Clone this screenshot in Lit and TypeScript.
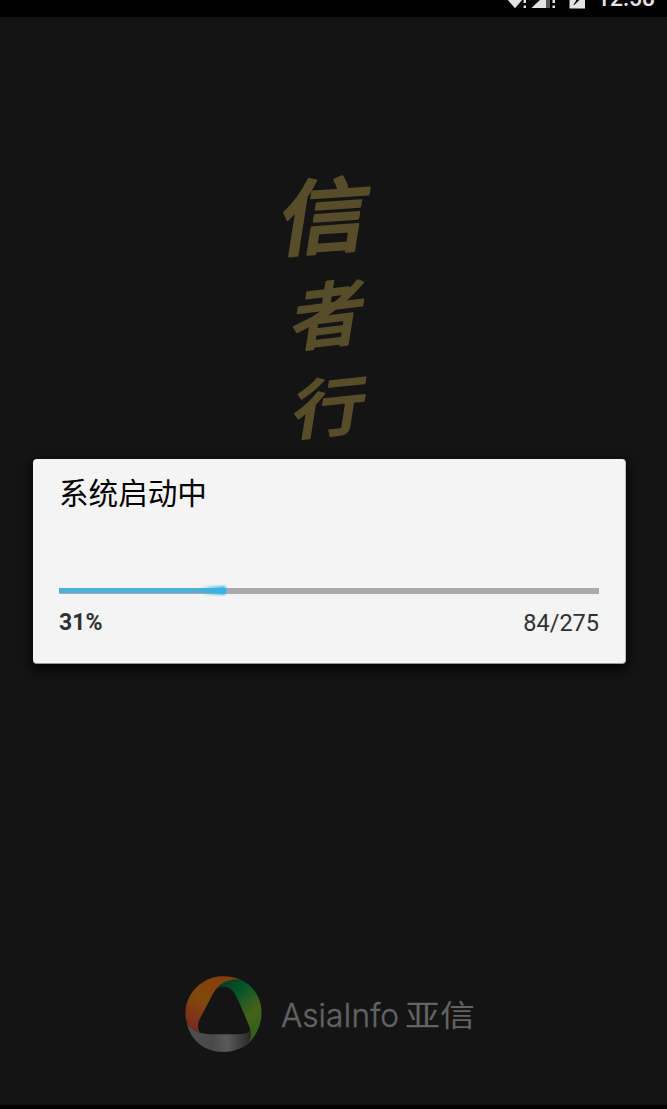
import { LitElement, html, css } from "lit";
import { customElement, property } from "lit/decorators.js";

@customElement("status-bar")
class StatusBar extends LitElement {
  static styles = css`
    :host { display: flex; height: 17px; background: #000; overflow: hidden; justify-content: flex-end; }
    svg { display: block; width: 180px; height: 17px; }
    text { font: 500 23.5px Roboto, sans-serif; fill: #e4e4e4; }
  `;
  render() {
    return html`<svg viewBox="487 0 180 17">
      <g fill="#e4e4e4">
        <path d="M507 -1H523L515 8.2Z" />
        <path d="M532 8V7.5L541 -1H546V8Z" />
        <path d="M546 0H550V8H546Z" fill="#555" />
        <path d="M523.6 -1H526V3H523.6ZM523.6 5.5H526V8H523.6ZM552.5 -1H555V3H552.5ZM552.5 5.5H555V8H552.5Z" />
        <path d="M569.5 -1H585V8.5H569.5Z" />
      </g>
      <path d="M576 -1H580.5L574 5.2L573.4 4.8L576 0.8Z" fill="#111" />
      <text x="597" y="5.5" textLength="58" lengthAdjust="spacingAndGlyphs">12:58</text>
    </svg>`;
  }
}

@customElement("brand-logo")
class BrandLogo extends LitElement {
  static styles = css`
    :host { display: flex; align-items: center; gap: 20px; }
    .ring { width: 77px; height: 76px; display: block; }
    .word { width: 200px; height: 50px; display: block; overflow: visible; }
    .latin { font: 300 32.5px Inter, sans-serif; fill: #636363; stroke: #636363; stroke-width: .4px; }
    .han { font: 34px "Noto Sans CJK SC", sans-serif; fill: #636363; }
  `;
  render() {
    return html`
      <svg class="ring" viewBox="31 32 231 228">
        <defs>
          <linearGradient id="warm" x1=".75" y1="0" x2=".15" y2="1">
            <stop offset="0" stop-color="#863d0e" /><stop offset=".5" stop-color="#82480a" />
            <stop offset=".78" stop-color="#7e3616" /><stop offset="1" stop-color="#7b2728" />
          </linearGradient>
          <linearGradient id="leaf" x1=".15" y1="0" x2=".8" y2="1">
            <stop offset="0" stop-color="#07391d" /><stop offset=".3" stop-color="#07552a" />
            <stop offset=".65" stop-color="#476219" /><stop offset="1" stop-color="#2c601d" />
          </linearGradient>
          <linearGradient id="steel">
            <stop offset="0" stop-color="#505050" /><stop offset=".4" stop-color="#494949" />
            <stop offset=".62" stop-color="#5a5a5a" /><stop offset="1" stop-color="#242424" />
          </linearGradient>
        </defs>
        <path fill="url(#steel)" d="M35 166C48 201 88 207 120 207L182 207C212 207 230 204 228 180C237 205 232 225 217 238C155 280 52 263 35 166Z" />
        <path fill="url(#leaf)" d="M126 62C145 39 166 37 193 41C271 72 285 176 217 238C234 218 231 198 221 176L192 108C178 76 166 64 148 64C138 63 130 67 126 72Z" />
        <path fill="url(#warm)" d="M193 41C155 28 116 31 87 49C49 72 28 112 33 158C40 185 55 195 77 202C67 190 68 174 77 157L111 93C126 64 145 42 193 41Z" />
      </svg>
      <svg class="word" viewBox="282 989 200 50">
        <text class="latin" x="281" y="1027" textLength="118" lengthAdjust="spacingAndGlyphs">AsiaInfo</text>
        <text class="han" transform="translate(405 1026) scale(1 .88)" textLength="70" lengthAdjust="spacingAndGlyphs">亚信</text>
      </svg>`;
  }
}

@customElement("progress-dialog")
class ProgressDialog extends LitElement {
  @property({ type: Number }) value = 84;
  @property({ type: Number }) max = 275;
  static styles = css`
    :host {
      display: flex; flex-direction: column; box-sizing: border-box;
      height: 205px; padding: 11px 26px 0 26px; border-radius: 4px;
      background: #f4f4f4; border-bottom: 1px solid #999; border-right: 1px solid #bbb;
      box-shadow: 0 5px 12px 2px rgba(0, 0, 0, .75);
      font-family: Roboto, "Noto Sans CJK SC", sans-serif; color: #303032;
    }
    .title { font: 29.6px/44px "Noto Sans CJK SC", sans-serif; color: #000; }
    .track { height: 6px; background: #aaa; margin-top: 74px; }
    .fill { height: 5px; background: linear-gradient(90deg, #4db1d8 85%, #37b3e5); position: relative; }
    .fill::after {
      content: ""; position: absolute; right: 0; top: -2px; width: 28px; height: 9px;
      border-radius: 60% 3px 3px 60%; background: linear-gradient(90deg, transparent, #37b3e5); filter: blur(.8px);
    }
    .row { display: flex; justify-content: space-between; align-items: center; margin-top: 14px; font-size: 23.5px; line-height: 30px; }
    .percent { font-weight: 700; font-size: 23px; }
  `;
  render() {
    return html`
      <div class="title">系统启动中</div>
      <div class="track"><div class="fill" style="width:${(this.value / this.max + 0.004) * 100}%"></div></div>
      <div class="row">
        <span class="percent">${Math.round((this.value / this.max) * 100)}%</span>
        <span>${this.value}/${this.max}</span>
      </div>`;
  }
}

@customElement("app-root")
class AppRoot extends LitElement {
  static styles = css`
    :host {
      display: flex; flex-direction: column; position: relative; box-sizing: border-box;
      width: 667px; height: 1109px; background: #141414; border-bottom: 4px solid #000; overflow: hidden;
    }
    .splash { flex: 1; display: flex; flex-direction: column; justify-content: space-between; padding: 118px 0 53px; }
    .motto { width: 140px; height: 340px; margin-left: 255px; display: block; overflow: visible; }
    .motto text { font: 500 86px "Noto Sans CJK SC", sans-serif; fill: #574d29; stroke: #574d29; stroke-width: 2.5px; stroke-linejoin: round; }
    brand-logo { margin-left: 185px; }
    progress-dialog { position: absolute; left: 33px; top: 459px; width: 593px; }
  `;
  render() {
    return html`
      <status-bar></status-bar>
      <div class="splash">
        <svg class="motto" viewBox="255 135 140 340">
          <text transform="translate(276 250) skewX(-9) skewY(-4) scale(1.02 .96)">信</text>
          <text transform="translate(289 346) skewX(-9) skewY(-7) scale(.82 .84)">者</text>
          <text transform="translate(290 435) skewX(-9) skewY(-6) scale(.83 .75)">行</text>
        </svg>
        <brand-logo></brand-logo>
      </div>
      <progress-dialog></progress-dialog>`;
  }
}
